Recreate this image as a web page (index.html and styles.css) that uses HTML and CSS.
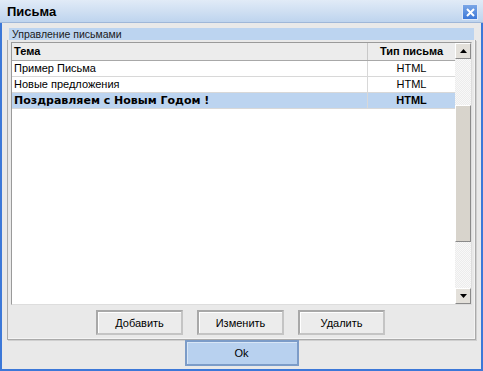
FILE: index.html
```html
<!DOCTYPE html>
<html>
<head>
<meta charset="utf-8">
<link rel="stylesheet" href="styles.css">
</head>
<body>
<div class="window">
  <div class="titlebar">
    <span class="title">Письма</span>
    <span class="close"><svg width="9" height="9" viewBox="0 0 9 9"><path d="M1 1L8 8M8 1L1 8" stroke="#fff" stroke-width="2"/></svg></span>
  </div>
  <div class="body">
    <div class="group">
      <div class="group-title">Управление письмами</div>
      <div class="group-frame">
        <div class="grid">
          <div class="table">
            <div class="row head">
              <div class="c1">Тема</div>
              <div class="c2">Тип письма</div>
            </div>
            <div class="row">
              <div class="c1">Пример Письма</div>
              <div class="c2">HTML</div>
            </div>
            <div class="row">
              <div class="c1">Новые предложения</div>
              <div class="c2">HTML</div>
            </div>
            <div class="row sel">
              <div class="c1">Поздравляем с Новым Годом !</div>
              <div class="c2">HTML</div>
            </div>
          </div>
          <div class="scroll">
            <div class="sbtn"><svg width="7" height="4" viewBox="0 0 7 4"><path d="M0 4L3.5 0L7 4Z" fill="#000"/></svg></div>
            <div class="track-top"></div>
            <div class="thumb"></div>
            <div class="track"></div>
            <div class="sbtn"><svg width="7" height="4" viewBox="0 0 7 4"><path d="M0 0L3.5 4L7 0Z" fill="#000"/></svg></div>
          </div>
        </div>
        <div class="actions">
          <button class="btn">Добавить</button>
          <button class="btn">Изменить</button>
          <button class="btn">Удалить</button>
        </div>
      </div>
    </div>
    <div class="footer">
      <button class="btn ok">Ok</button>
    </div>
  </div>
</div>
</body>
</html>
```
FILE: styles.css
```css
html, body {
  margin: 0;
  padding: 0;
}
body {
  font-family: "Liberation Sans", Arial, sans-serif;
  font-size: 11px;
  color: #000;
  background: #fff;
}
.window {
  width: 483px;
  height: 371px;
  box-sizing: border-box;
  display: flex;
  flex-direction: column;
  background: #e9e9e9;
  border: 2px solid #3c78d8;
  border-top: none;
}
.titlebar {
  height: 22px;
  margin: 0 -2px;
  display: flex;
  align-items: center;
  justify-content: space-between;
  padding: 0 5px 0 7px;
  background: linear-gradient(#e1ebf7, #bed4ee);
  border-bottom: 1px solid #9fb7d8;
  flex-shrink: 0;
}
.title {
  font-weight: bold;
  font-size: 13px;
  color: #000;
}
.close {
  width: 16px;
  height: 16px;
  margin-top: 2px;
  background: linear-gradient(#7aa6e6, #3c78d8);
  display: flex;
  align-items: center;
  justify-content: center;
  box-sizing: border-box;
  border: 1px solid #dfe9f7;
}
.body {
  flex: 1;
  display: flex;
  flex-direction: column;
  padding: 5px 5px 3px 5px;
}
.group {
  display: flex;
  flex-direction: column;
  height: 310px;
}
.group-title {
  height: 12px;
  line-height: 12px;
  background: #bcd4f0;
  padding-left: 3px;
  margin: 0 2px;
  font-size: 10.5px;
  color: #1a1a1a;
}
.group-frame {
  flex: 1;
  border: 1px solid #aaa;
  border-top: none;
  box-shadow: inset -1px -1px 0 #f4f4f4, 1px 1px 0 #cfcfcf;
  display: flex;
  flex-direction: column;
  padding: 2px 3px 4px 3px;
}
.grid {
  height: 261px;
  display: flex;
  border: 1px solid #9a9a9a;
  border-right-color: #ddd;
  border-bottom-color: #ddd;
  background: #fff;
}
.table {
  flex: 1;
  display: flex;
  flex-direction: column;
}
.row {
  display: flex;
  height: 16px;
  border-bottom: 1px solid #d8d8d8;
  box-sizing: border-box;
}
.row > div {
  line-height: 15px;
  white-space: nowrap;
}
.c1 {
  flex: 1;
  padding-left: 2px;
  border-right: 1px solid #d8d8d8;
}
.c2 {
  width: 87px;
  text-align: center;
}
.row.head {
  height: 18px;
  background: #ececec;
  font-weight: bold;
  border-bottom: 1px solid #a8a8a8;
}
.row.head > div {
  line-height: 17px;
}
.row.head .c1 {
  border-right: 1px solid #c8c8c8;
}
.row.sel {
  background: #bcd4f0;
  font-weight: bold;
}
.row.sel .c1 {
  font-family: "DejaVu Sans", sans-serif;
  font-size: 11px;
}
.scroll {
  width: 16px;
  display: flex;
  flex-direction: column;
  background: repeating-conic-gradient(#ececec 0 25%, #f8f8f8 0 50%) 0 0 / 2px 2px;
}
.sbtn {
  height: 16px;
  box-sizing: border-box;
  background: #e3e0da;
  border: 1px solid;
  border-color: #fff #8a8a8a #8a8a8a #fff;
  display: flex;
  align-items: center;
  justify-content: center;
}
.track-top {
  height: 46px;
}
.thumb {
  height: 137px;
  box-sizing: border-box;
  background: #d8d4cc;
  border: 1px solid;
  border-color: #fff #8a8a8a #8a8a8a #fff;
}
.track {
  flex: 1;
}
.actions {
  display: flex;
  justify-content: center;
  gap: 14px;
  padding-top: 5px;
  padding-right: 2px;
}
.btn {
  font-family: "Liberation Sans", Arial, sans-serif;
  font-size: 11px;
  width: 87px;
  height: 25px;
  background: #ececec;
  border: 2px solid #a8a8a8;
  border-right-color: #c4c4c4;
  border-bottom-color: #c4c4c4;
  box-shadow: inset 1px 1px 0 #fff;
  color: #000;
  padding: 0;
}
.footer {
  display: flex;
  justify-content: center;
  padding-top: 2px;
}
.btn.ok {
  width: 114px;
  height: 26px;
  background: #b8d1ef;
  border-color: #7c9cc8;
  box-shadow: inset 1px 1px 0 #d8e6f6;
}
```
